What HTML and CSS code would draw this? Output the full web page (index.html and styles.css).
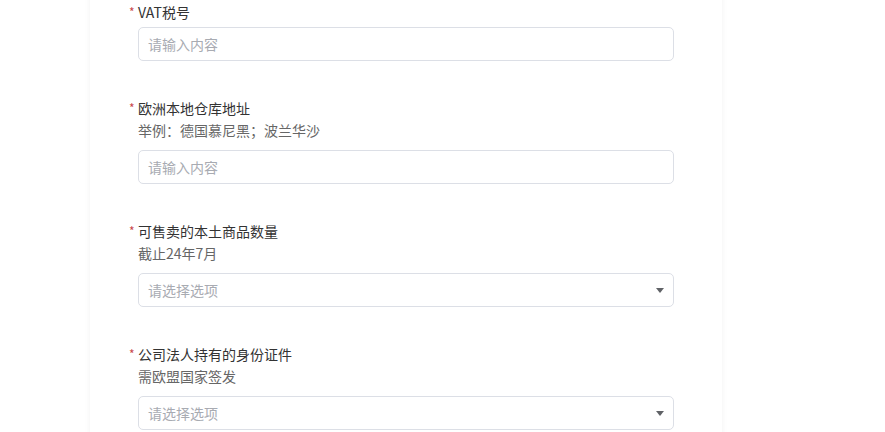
FILE: index.html
```html
<!DOCTYPE html>
<html lang="zh-CN">
<head>
<meta charset="utf-8">
<title>Form</title>
<link rel="stylesheet" href="styles.css">
</head>
<body>
<div class="page">
  <div class="card">
    <div class="item">
      <div class="label"><span class="req">*</span>VAT税号</div>
      <div class="field"><span class="ph">请输入内容</span></div>
    </div>
    <div class="item">
      <div class="label"><span class="req">*</span>欧洲本地仓库地址</div>
      <div class="help">举例：德国慕尼黑；波兰华沙</div>
      <div class="field"><span class="ph">请输入内容</span></div>
    </div>
    <div class="item">
      <div class="label"><span class="req">*</span>可售卖的本土商品数量</div>
      <div class="help">截止24年7月</div>
      <div class="field select"><span class="ph">请选择选项</span><span class="arrow"></span></div>
    </div>
    <div class="item">
      <div class="label"><span class="req">*</span>公司法人持有的身份证件</div>
      <div class="help">需欧盟国家签发</div>
      <div class="field select"><span class="ph">请选择选项</span><span class="arrow"></span></div>
    </div>
  </div>
</div>
</body>
</html>
```

FILE: styles.css
```css
* { box-sizing: border-box; }
html, body { margin: 0; padding: 0; background: #ffffff; }
body {
  font-family: "Noto Sans CJK SC", "Noto Sans", "Liberation Sans", sans-serif;
  font-size: 14px;
  color: #333333;
}
.page {
  width: 885px;
  height: 432px;
  padding-left: 90px;
  overflow: hidden;
  display: flow-root;
}
.card {
  width: 632px;
  margin-top: -20px;
  padding: 21px 48px 40px 48px;
  background: #ffffff;
  box-shadow: 0 0 6px rgba(0, 0, 0, 0.06);
  display: flex;
  flex-direction: column;
  gap: 36px;
}
.item {
  display: flex;
  flex-direction: column;
}
.label {
  display: flex;
  line-height: 22px;
  margin-left: -10px;
  color: #333333;
  margin-bottom: 4px;
}
.req {
  width: 10px;
  color: #c9484c;
  font-size: 12px;
  padding-left: 1px;
}
.help {
  line-height: 22px;
  color: #666666;
  margin-top: -4px;
  margin-bottom: 9px;
}
.field {
  height: 34px;
  border: 1px solid #dcdfe6;
  border-radius: 5px;
  padding: 0 9px;
  display: flex;
  align-items: center;
  justify-content: space-between;
}
.ph {
  color: #a8abb2;
  line-height: 20px;
}
.arrow {
  width: 0;
  height: 0;
  border-left: 4.5px solid transparent;
  border-right: 4.5px solid transparent;
  border-top: 5px solid #606266;
}
```
